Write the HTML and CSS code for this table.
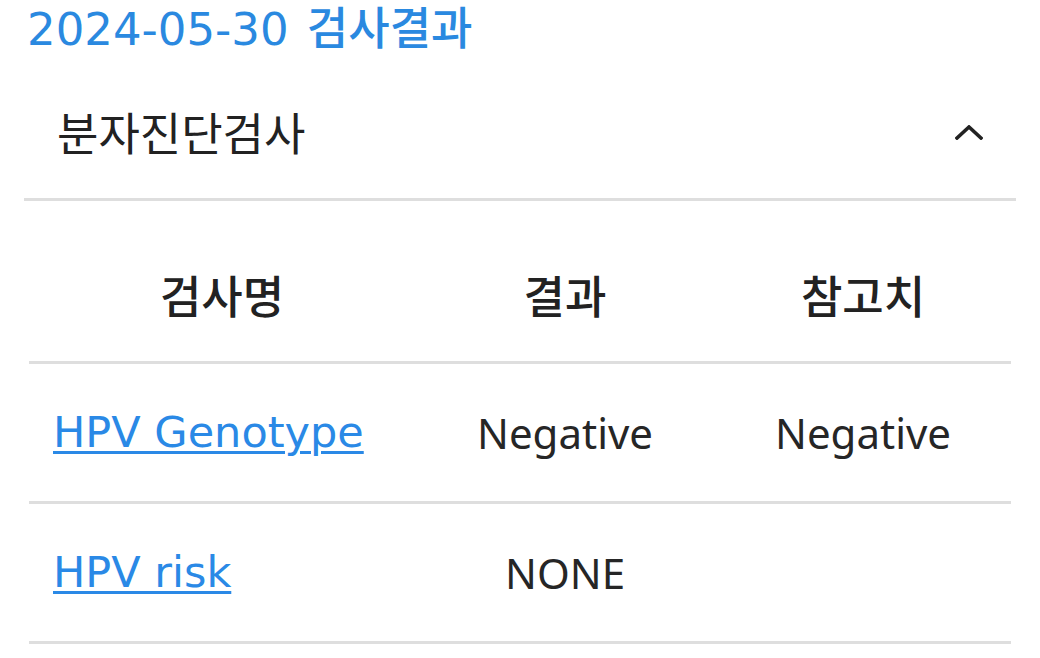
FILE: index.html
```html
<!DOCTYPE html>
<html lang="ko">
<head>
<meta charset="utf-8">
<link rel="stylesheet" href="styles.css">
</head>
<body>
<div class="page">
  <h1 class="title">2024-05-30 <span class="title-ko">검사결과</span></h1>
  <div class="section-head">
    <span class="section-name">분자진단검사</span>
    <svg class="chevron" width="28" height="15" viewBox="0 0 28 15" aria-hidden="true">
      <polyline points="2,13 14,2 26,13" fill="none" stroke="#222" stroke-width="3.6" stroke-linecap="square" stroke-linejoin="miter"/>
    </svg>
  </div>
  <div class="table">
    <div class="row head">
      <div class="cell center">검사명</div>
      <div class="cell center">결과</div>
      <div class="cell center">참고치</div>
    </div>
    <div class="row">
      <div class="cell name"><a href="#" class="link">HPV Genotype</a></div>
      <div class="cell center val">Negative</div>
      <div class="cell center val">Negative</div>
    </div>
    <div class="row">
      <div class="cell name"><a href="#" class="link">HPV risk</a></div>
      <div class="cell center val">NONE</div>
      <div class="cell center val"></div>
    </div>
  </div>
</div>
</body>
</html>
```

FILE: styles.css
```css
html, body {
  margin: 0;
  padding: 0;
  background: #ffffff;
}

.page {
  width: 1040px;
  height: 658px;
  overflow: hidden;
}

.title {
  margin: 0;
  height: 58px;
  box-sizing: border-box;
  padding: 2px 0 0 27px;
  font-family: "DejaVu Sans", "Noto Sans CJK KR", sans-serif;
  font-weight: 400;
  font-size: 45px;
  line-height: 56px;
  color: #2a89e0;
  white-space: nowrap;
}

.title-ko {
  font-family: "Noto Sans CJK KR", sans-serif;
  font-size: 45px;
  font-weight: 500;
  line-height: 40px;
  margin-left: 4px;
}

.section-head {
  margin: 0 24px;
  height: 143px;
  padding: 6px 33px 0 33px;
  box-sizing: border-box;
  border-bottom: 3px solid #dedede;
  display: flex;
  align-items: center;
  justify-content: space-between;
}

.section-name {
  font-family: "Noto Sans CJK KR", sans-serif;
  font-size: 45px;
  font-weight: 400;
  color: #222;
  line-height: 1;
}

.chevron {
  display: block;
  margin-top: 2px;
}

.table {
  margin: 0 29px;
}

.row {
  display: grid;
  grid-template-columns: 386px 300px 1fr;
  align-items: center;
  height: 137px;
  border-bottom: 3px solid #dedede;
}

.row.head {
  height: 163px;
  padding-top: 26px;
  box-sizing: border-box;
  font-family: "Noto Sans CJK KR", sans-serif;
  font-size: 45px;
  font-weight: 500;
  color: #222;
}

.cell {
  line-height: 1;
}

.center {
  text-align: center;
}

.name {
  padding-left: 24px;
}

.val {
  font-family: "Noto Sans", sans-serif;
  font-size: 42px;
  color: #262626;
}

.link {
  font-family: "DejaVu Sans", sans-serif;
  font-size: 43px;
  color: #2a89e6;
  text-decoration: underline;
  text-decoration-thickness: 3px;
  text-underline-offset: 4px;
}
```
